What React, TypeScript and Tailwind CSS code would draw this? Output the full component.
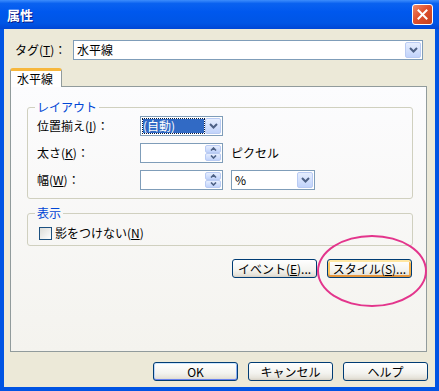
import React from "react";

const Acc = ({ children }: { children: React.ReactNode }) => (
  <span className="underline underline-offset-[1px]">{children}</span>
);

const Chevron = ({ up = false }: { up?: boolean }) => (
  <svg width="9" height="6" viewBox="0 0 9 6">
    <path
      d={up ? "M1 5 L4.5 1.5 L8 5" : "M1 1 L4.5 4.5 L8 1"}
      fill="none"
      stroke="#4d6185"
      strokeWidth="2"
    />
  </svg>
);

const SmallChevron = ({ up = false }: { up?: boolean }) => (
  <svg width="7" height="4" viewBox="0 0 7 4">
    <path
      d={up ? "M1 3.5 L3.5 1 L6 3.5" : "M1 0.5 L3.5 3 L6 0.5"}
      fill="none"
      stroke="#4d6185"
      strokeWidth="1.6"
    />
  </svg>
);

const DropButton = () => (
  <div className="w-[16px] h-full rounded-[2px] border border-[#b9cbf3] bg-[linear-gradient(to_bottom,#e6eefe,#c1d3fb)] flex items-center justify-center">
    <Chevron />
  </div>
);

const Combo = ({
  width,
  children,
}: {
  width: string;
  children?: React.ReactNode;
}) => (
  <div
    className={`${width} h-[20px] border border-[#7f9db9] bg-white flex items-stretch p-[1px]`}
  >
    <div className="flex-1 flex items-center min-w-0">{children}</div>
    <DropButton />
  </div>
);

const Spin = () => (
  <div className="w-[83px] h-[20px] border border-[#7f9db9] bg-white flex items-stretch p-[1px]">
    <div className="flex-1" />
    <div className="w-[16px] flex flex-col">
      <div className="flex-1 rounded-[2px] border border-[#b9cbf3] bg-[linear-gradient(to_bottom,#e6eefe,#c1d3fb)] flex items-center justify-center">
        <SmallChevron up />
      </div>
      <div className="flex-1 rounded-[2px] border border-[#b9cbf3] bg-[linear-gradient(to_bottom,#e6eefe,#c1d3fb)] flex items-center justify-center">
        <SmallChevron />
      </div>
    </div>
  </div>
);

const XpButton = ({
  children,
  kind,
}: {
  children: React.ReactNode;
  kind?: "default" | "focus";
}) => {
  const inner =
    kind === "focus"
      ? "shadow-[inset_0_2px_0_#ffe7a2,inset_0_-2px_0_#e5973e,inset_2px_0_0_#fbc761,inset_-2px_0_0_#f5b14a]"
      : kind === "default"
      ? "shadow-[inset_0_1px_0_#cee7ff,inset_0_-1px_0_#6982ee,inset_1px_0_0_#bcd4f6,inset_-1px_0_0_#89adf4]"
      : "";
  return (
    <button
      className={`w-[85px] h-[19px] rounded-[3px] border border-[#003c74] bg-[linear-gradient(to_bottom,#ffffff,#f3f3ef_60%,#e6e3da_88%,#d6d0c5)] text-[12px] leading-none text-black flex items-center justify-center ${inner}`}
    >
      {children}
    </button>
  );
};

export default function App() {
  return (
    <div className="w-[439px] h-[391px] bg-[#0054e3] flex flex-col text-[12px] text-black [font-family:'Noto_Sans_CJK_JP','Noto_Sans',sans-serif] overflow-hidden">
      {/* title bar */}
      <div className="h-[29px] shrink-0 flex items-center justify-between pl-[7px] pr-[6px] bg-[linear-gradient(to_bottom,#3d8dfc_0%,#0a62f0_12%,#0058ee_40%,#0055e5_80%,#0046d5_100%)]">
        <span className="text-white font-bold text-[13px] [text-shadow:1px_1px_0_#0a1883]">
          属性
        </span>
        <div className="w-[21px] h-[21px] rounded-[3px] border border-white bg-[linear-gradient(135deg,#f08a68,#e0502e_45%,#c3411f)] flex items-center justify-center">
          <svg width="11" height="11" viewBox="0 0 11 11">
            <path
              d="M1.5 1.5 L9.5 9.5 M9.5 1.5 L1.5 9.5"
              stroke="white"
              strokeWidth="2"
              strokeLinecap="square"
            />
          </svg>
        </div>
      </div>

      {/* body */}
      <div className="flex-1 mx-[4px] mb-[4px] bg-[#ece9d8] relative flex flex-col">
        <div className="mt-[11px] pl-[11px] flex items-center">
          <span className="w-[58px]">
            タグ(<Acc>T</Acc>)：
          </span>
          <Combo width="w-[350px]">
            <span className="pl-[2px]">水平線</span>
          </Combo>
        </div>

        {/* tabs */}
        <div className="ml-[6px] mt-[8px] flex flex-col">
          <div className="flex">
            <div className="relative z-10 w-[52px] h-[19px] -mb-[1px] bg-white border-x border-[#919b9c] border-t-[3px] border-t-[#f7b73c] rounded-t-[3px] flex items-center pl-[6px]">
              水平線
            </div>
          </div>
          <div className="w-[417px] h-[266px] border border-[#919b9c] bg-[linear-gradient(to_bottom,#fcfcfe,#f4f3ee)] flex flex-col">
            <fieldset className="mt-[12px] ml-[16px] w-[386px] h-[100px] border border-[#d0d0bf] rounded-[3px] pl-[9px] pb-[9px]">
              <legend className="ml-[-2px] px-[2px] h-[16px] leading-[16px] text-[#0046d5]">
                レイアウト
              </legend>
              <div className="mt-[1px] flex flex-col gap-[7px]">
                <div className="flex items-center">
                  <span className="w-[103px]">
                    位置揃え(<Acc>I</Acc>)：
                  </span>
                  <Combo width="w-[83px]">
                    <span className="ml-[1px] h-[14px] w-[61px] bg-[#316ac5] text-white outline-1 outline-dotted outline-[#0b1a3a] leading-[14px]">
                      (自動)
                    </span>
                  </Combo>
                </div>
                <div className="flex items-center">
                  <span className="w-[103px]">
                    太さ(<Acc>K</Acc>)：
                  </span>
                  <Spin />
                  <span className="ml-[8px]">ピクセル</span>
                </div>
                <div className="flex items-center">
                  <span className="w-[103px]">
                    幅(<Acc>W</Acc>)：
                  </span>
                  <Spin />
                  <div className="ml-[8px]">
                    <Combo width="w-[84px]">
                      <span className="pl-[2px]">%</span>
                    </Combo>
                  </div>
                </div>
              </div>
            </fieldset>

            <fieldset className="mt-[6px] ml-[16px] w-[386px] h-[41px] border border-[#d0d0bf] rounded-[3px] pl-[11px]">
              <legend className="ml-[-4px] px-[2px] h-[16px] leading-[16px] text-[#0046d5]">
                表示
              </legend>
              <div className="mt-[3px] flex items-center gap-[3px]">
                <div className="w-[13px] h-[13px] border border-[#1c5180] bg-[linear-gradient(135deg,#dcdcd7,#ffffff)]" />
                <span>
                  影をつけない(<Acc>N</Acc>)
                </span>
              </div>
            </fieldset>

            <div className="mt-[13px] pr-[14px] flex justify-end gap-[10px]">
              <XpButton>
                イベント(<Acc>E</Acc>)...
              </XpButton>
              <XpButton kind="focus">
                スタイル(<Acc>S</Acc>)...
              </XpButton>
            </div>
          </div>
        </div>

        <div className="mt-[10px] pr-[7px] flex justify-end gap-[10px]">
          <XpButton kind="default">OK</XpButton>
          <XpButton>キャンセル</XpButton>
          <XpButton>ヘルプ</XpButton>
        </div>

        {/* annotation */}
        <div className="absolute left-[313px] top-[206px] w-[110px] h-[72px] rounded-[50%] border-2 border-[#e3358c] pointer-events-none" />
      </div>
    </div>
  );
}
